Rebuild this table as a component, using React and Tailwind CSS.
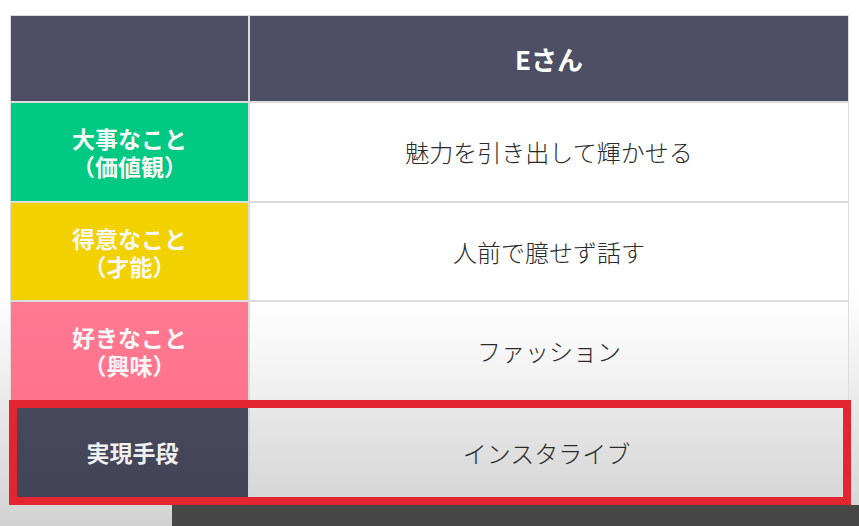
import React from "react";

const font = { fontFamily: '"Noto Sans CJK JP", "Noto Sans", sans-serif' };

function Label({ bg, top, bottom }) {
  return (
    <div className={`flex items-center justify-center text-center text-[23px] font-bold leading-[28px] text-[#f7f7f7] ${bg}`}>
      <p>
        {top}
        <br />
        {bottom}
      </p>
    </div>
  );
}

function Value({ bg, children }) {
  return (
    <div className={`flex items-center justify-center text-[24px] font-light text-[#2a2a2a] ${bg}`}>
      {children}
    </div>
  );
}

export default function App() {
  return (
    <div
      style={font}
      className="w-[859px] h-[526px] overflow-hidden flex flex-col bg-[linear-gradient(to_bottom,#ffffff_0%,#ffffff_55%,#d2d2d2_100%)]"
    >
      <div className="pt-[15px] pl-[10px]">
        <div className="w-[839px] bg-[#dcdcdc] pt-px px-px grid grid-cols-[237px_598px] grid-rows-[85px_98px_97px_98px] gap-[2px]">
          <div className="bg-[#4e4f65]" />
          <div className="bg-[#4e4f65] flex items-center justify-center text-[26px] font-bold text-white">
            Eさん
          </div>
          <Label bg="bg-[#00c983]" top="大事なこと" bottom="（価値観）" />
          <Value bg="bg-white">魅力を引き出して輝かせる</Value>
          <Label bg="bg-[#f2d100]" top="得意なこと" bottom="（才能）" />
          <Value bg="bg-white">人前で臆せず話す</Value>
          <Label bg="bg-[linear-gradient(to_bottom,#ff7991,#fe738c)]" top="好きなこと" bottom="（興味）" />
          <Value bg="bg-[linear-gradient(to_bottom,#ffffff,#eeeeee)]">ファッション</Value>
        </div>
      </div>
      <div className="ml-[9px] w-[842px] h-[105px] border-[8px] border-[#e3252f] bg-[#d6d6d6] grid grid-cols-[231px_593px] gap-[2px]">
        <div className="bg-[linear-gradient(to_bottom,#47485c,#434457)] flex items-center justify-center text-[23px] font-bold text-[#f0f0f0]">
          実現手段
        </div>
        <Value bg="bg-[linear-gradient(to_bottom,#e8e8e8,#d6d6d6)]">インスタライブ</Value>
      </div>
      <div className="flex flex-1">
        <div className="w-[172px]" />
        <div className="flex-1 bg-[#474747]" />
      </div>
    </div>
  );
}
